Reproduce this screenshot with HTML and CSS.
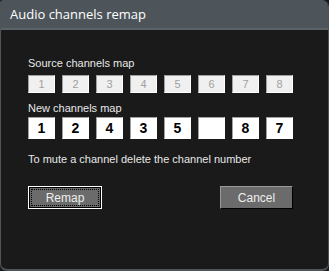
FILE: index.html
```html
<!DOCTYPE html>
<html>
<head>
<meta charset="utf-8">
<link rel="stylesheet" href="styles.css">
</head>
<body>
<div class="window">
  <div class="titlebar">Audio channels remap</div>
  <div class="content">
    <div class="label">Source channels map</div>
    <div class="row">
      <div class="src">1</div><div class="src">2</div><div class="src">3</div><div class="src">4</div>
      <div class="src">5</div><div class="src">6</div><div class="src">7</div><div class="src">8</div>
    </div>
    <div class="label label-new">New channels map</div>
    <div class="row">
      <div class="dst">1</div><div class="dst">2</div><div class="dst">4</div><div class="dst">3</div>
      <div class="dst">5</div><div class="dst"></div><div class="dst">8</div><div class="dst">7</div>
    </div>
    <div class="label label-mute">To mute a channel delete the channel number</div>
    <div class="buttons">
      <div class="btn btn-default"><span class="focus">Remap</span></div>
      <div class="btn btn-cancel">Cancel</div>
    </div>
  </div>
</div>
</body>
</html>
```

FILE: styles.css
```css
html, body {
  margin: 0;
  padding: 0;
  background: #1a1a1a;
}
.window {
  width: 329px;
  height: 271px;
  box-sizing: border-box;
  background: #1a1a1a;
  border: solid #4d555a;
  border-width: 0 1px 2px 1px;
  border-radius: 3px 7px 7px 7px;
  overflow: hidden;
  display: flex;
  flex-direction: column;
}
.titlebar {
  height: 30px;
  box-sizing: border-box;
  background: #4d555a;
  border-bottom: 2px solid #5a6266;
  padding-left: 9px;
  color: #ffffff;
  font: 13px "Open Sans", "Noto Sans", sans-serif;
  line-height: 28px;
}
.content {
  padding: 27px 0 0 27px;
  display: flex;
  flex-direction: column;
  font-family: "Liberation Sans", Arial, sans-serif;
}
.label {
  color: #e8e8e8;
  font-size: 11px;
  line-height: 13px;
  height: 13px;
}
.label-new { margin-top: 9px; }
.label-mute { margin-top: 14px; }
.row {
  display: flex;
  gap: 7px;
  margin-top: 5px;
}
.label-new + .row { margin-top: 2px; }
.src {
  width: 27px;
  height: 18px;
  box-sizing: border-box;
  background: #f0f0f0;
  border: 1px solid;
  border-color: #a0a0a0 #ffffff #ffffff #a0a0a0;
  color: #a0a0a0;
  font-size: 11px;
  line-height: 16px;
  text-align: center;
}
.dst {
  width: 27px;
  height: 22px;
  box-sizing: border-box;
  background: #ffffff;
  border: 1px solid;
  border-color: #a0a0a0 #ffffff #ffffff #a0a0a0;
  color: #000000;
  font-size: 14px;
  font-weight: bold;
  line-height: 20px;
  text-align: center;
}
.buttons {
  display: flex;
  justify-content: space-between;
  width: 265px;
  margin-top: 20px;
}
.btn {
  width: 74px;
  height: 23px;
  box-sizing: border-box;
  background: #6b6b6b;
  color: #eeeeee;
  font-size: 12px;
  display: flex;
  align-items: center;
  justify-content: center;
}
.btn-default {
  border: 1px solid #ffffff;
  box-shadow: inset 0 0 0 1px #000000;
  padding: 2px;
}
.focus {
  flex: 1;
  align-self: stretch;
  border: 1px dotted #000000;
  display: flex;
  align-items: center;
  justify-content: center;
}
.btn-cancel {
  width: 73px;
  border: 1px solid;
  border-color: #9a9a9a #000000 #000000 #9a9a9a;
}
```
